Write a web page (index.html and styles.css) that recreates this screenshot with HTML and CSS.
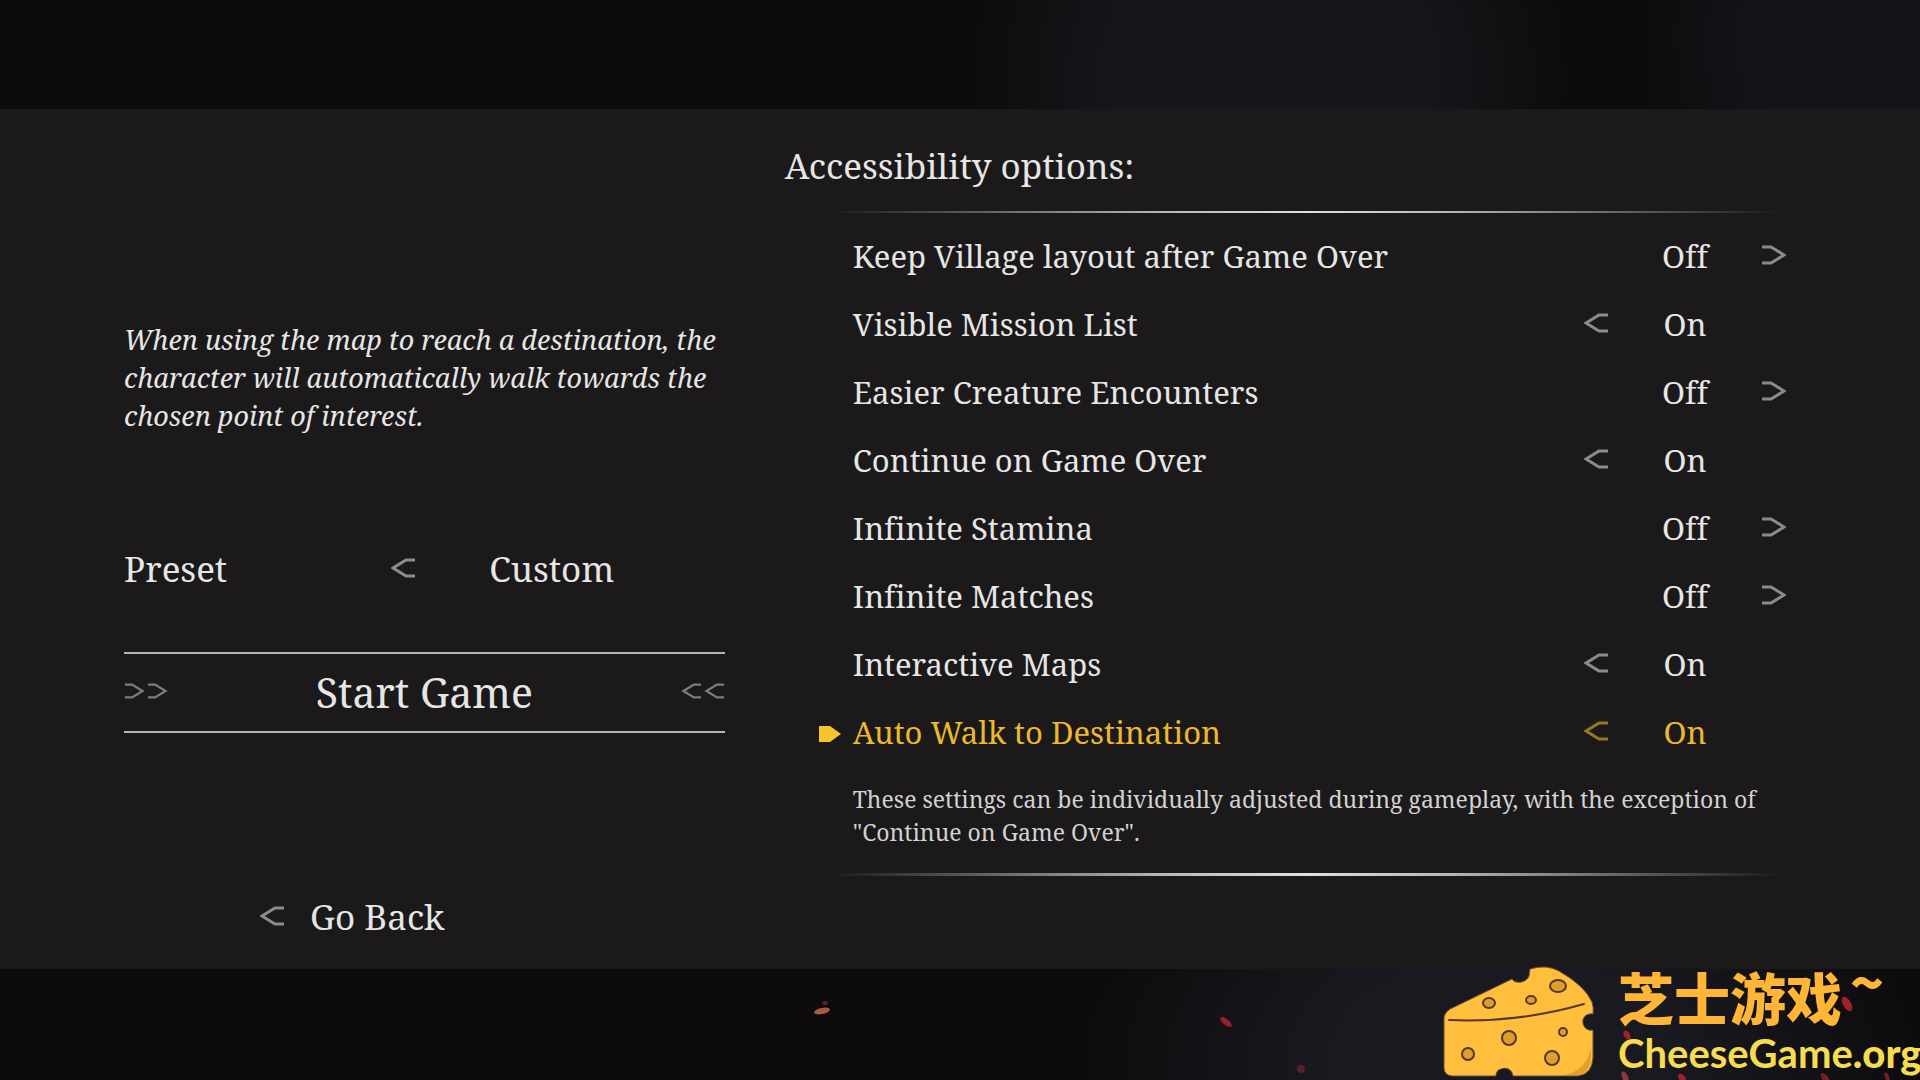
FILE: index.html
```html
<!DOCTYPE html>
<html lang="en">
  <head>
    <meta charset="UTF-8" />
    <meta name="viewport" content="width=device-width, initial-scale=1.0" />
    <title>Accessibility options</title>
    <link rel="stylesheet" href="styles.css">
  </head>
  <body>
    <!-- Shared arrow shapes -->
    <svg class="defs" aria-hidden="true">
      <symbol id="arrow-left" viewBox="0 0 24 20">
        <path d="M24 2H15L2 10L15 18H24" />
      </symbol>
      <symbol id="arrow-right" viewBox="0 0 24 20">
        <path d="M0 2H9L22 10L9 18H0" />
      </symbol>
    </svg>

    <main class="panel">
      <section class="side">
        <p class="hint">When using the map to reach a destination, the character will automatically walk towards the chosen point of interest.</p>

        <div class="preset">
          <span class="preset-label" id="preset">Preset</span>
          <button class="arrow" aria-label="Previous preset"><svg><use href="#arrow-left" /></svg></button>
          <output class="value" aria-labelledby="preset">Custom</output>
        </div>

        <button class="start">
          <span class="arrows"><svg><use href="#arrow-right" /></svg><svg><use href="#arrow-right" /></svg></span>
          <span>Start Game</span>
          <span class="arrows"><svg><use href="#arrow-left" /></svg><svg><use href="#arrow-left" /></svg></span>
        </button>

        <button class="back">
          <svg><use href="#arrow-left" /></svg>
          <span>Go Back</span>
        </button>
      </section>

      <section class="settings">
        <h1>Accessibility options:</h1>
        <hr class="line">
        <ul class="options">
          <li class="option">
            <span class="label" id="opt-village">Keep Village layout after Game Over</span>
            <output class="value" aria-labelledby="opt-village">Off</output>
            <button class="arrow next" aria-label="Turn on"><svg><use href="#arrow-right" /></svg></button>
          </li>
          <li class="option">
            <span class="label" id="opt-missions">Visible Mission List</span>
            <button class="arrow prev" aria-label="Turn off"><svg><use href="#arrow-left" /></svg></button>
            <output class="value" aria-labelledby="opt-missions">On</output>
          </li>
          <li class="option">
            <span class="label" id="opt-creatures">Easier Creature Encounters</span>
            <output class="value" aria-labelledby="opt-creatures">Off</output>
            <button class="arrow next" aria-label="Turn on"><svg><use href="#arrow-right" /></svg></button>
          </li>
          <li class="option">
            <span class="label" id="opt-continue">Continue on Game Over</span>
            <button class="arrow prev" aria-label="Turn off"><svg><use href="#arrow-left" /></svg></button>
            <output class="value" aria-labelledby="opt-continue">On</output>
          </li>
          <li class="option">
            <span class="label" id="opt-stamina">Infinite Stamina</span>
            <output class="value" aria-labelledby="opt-stamina">Off</output>
            <button class="arrow next" aria-label="Turn on"><svg><use href="#arrow-right" /></svg></button>
          </li>
          <li class="option">
            <span class="label" id="opt-matches">Infinite Matches</span>
            <output class="value" aria-labelledby="opt-matches">Off</output>
            <button class="arrow next" aria-label="Turn on"><svg><use href="#arrow-right" /></svg></button>
          </li>
          <li class="option">
            <span class="label" id="opt-maps">Interactive Maps</span>
            <button class="arrow prev" aria-label="Turn off"><svg><use href="#arrow-left" /></svg></button>
            <output class="value" aria-labelledby="opt-maps">On</output>
          </li>
          <li class="option selected">
            <svg class="marker" viewBox="0 0 22 16"><path d="M0 0H11L22 8L11 16H0Z" /></svg>
            <span class="label" id="opt-walk">Auto Walk to Destination</span>
            <button class="arrow prev" aria-label="Turn off"><svg><use href="#arrow-left" /></svg></button>
            <output class="value" aria-labelledby="opt-walk">On</output>
          </li>
        </ul>
        <p class="note">These settings can be individually adjusted during gameplay, with the exception of "Continue on Game Over".</p>
        <hr class="line thick">
      </section>
    </main>

    <!-- Embers floating over the background -->
    <svg class="embers" viewBox="0 0 1120 110" aria-hidden="true">
      <ellipse cx="22" cy="41" rx="8" ry="3" fill="#a85a48" transform="rotate(-12 22 41)" />
      <ellipse cx="25" cy="33" rx="3" ry="2" fill="#4a2624" />
      <ellipse cx="426" cy="52" rx="7" ry="3" fill="#97202b" transform="rotate(40 426 52)" />
      <circle cx="501" cy="99" r="4" fill="#5a1f27" />
      <ellipse cx="1047" cy="34" rx="8" ry="4" fill="#a3202b" transform="rotate(60 1047 34)" />
      <ellipse cx="827" cy="65" rx="5" ry="3" fill="#a3202b" transform="rotate(60 827 65)" />
      <ellipse cx="825" cy="107" rx="6" ry="3" fill="#8a3a42" transform="rotate(65 825 107)" />
      <ellipse cx="882" cy="108" rx="5" ry="3" fill="#a3202b" transform="rotate(50 882 108)" />
      <ellipse cx="1025" cy="108" rx="6" ry="3" fill="#7a1c26" transform="rotate(50 1025 108)" />
      <ellipse cx="1087" cy="107" rx="5" ry="2" fill="#7a1c26" transform="rotate(70 1087 107)" />
    </svg>

    <div class="brand">
      <svg class="cheese" viewBox="0 0 156 114" aria-hidden="true">
        <path class="body" d="M4 51Q5 46 10 43L72 13C75 18 84 17 88 12C90 9 89 6 90 3Q106 -2 119 5Q145 20 152 36Q154 42 153 48C146 47 142 52 143 57C144 63 149 65 153 64V92Q152 108 138 110H73C72 103 66 101 61 103C57 104 56 107 56 110H12Q4 109 4 102Z" />
        <path class="shade" d="M151 82V92Q150 107 138 109H122Q145 107 151 82Z" />
        <path class="crease" d="M9 54Q78 57 144 38" />
        <g class="holes">
          <ellipse cx="49" cy="37" rx="6" ry="5" />
          <ellipse cx="91" cy="34" rx="5" ry="4" />
          <ellipse cx="118" cy="20" rx="8" ry="6" />
          <ellipse cx="69" cy="72" rx="7" ry="7" />
          <circle cx="123" cy="66" r="4" />
          <ellipse cx="28" cy="88" rx="6" ry="6" />
          <ellipse cx="112" cy="92" rx="7" ry="7" />
        </g>
      </svg>
      <div class="brand-text">
        <span class="brand-cn" lang="zh">芝士游戏<span class="tilde">~</span></span>
        <span class="brand-url">CheeseGame<b>.org</b></span>
      </div>
    </div>
  </body>
</html>
```

FILE: styles.css
```css
* {
  box-sizing: border-box;
}
body {
  margin: 0;
  padding: 109px 0 111px;
  min-height: 100vh;
  display: flex;
  position: relative;
  overflow-x: hidden;
  color: #e6e6e6;
  font-family: "Noto Serif", "DejaVu Serif Condensed", "DejaVu Serif", serif;
  font-variant-ligatures: none;
  background:
    radial-gradient(ellipse 300px 300px at 1270px 80px, #17161b 50%, transparent),
    radial-gradient(ellipse 220px 300px at 1860px 40px, #141318 50%, transparent),
    radial-gradient(ellipse 420px 260px at 1500px 1060px, #191920 40%, transparent),
    #0d0b0c;
}
button {
  padding: 0;
  border: 0;
  background: none;
  color: inherit;
  font: inherit;
  cursor: pointer;
}
svg {
  display: block;
  fill: none;
}
.defs {
  position: absolute;
  width: 0;
  height: 0;
}
.panel {
  flex: 1;
  display: grid;
  grid-template-columns: 3fr 5fr;
  gap: 60px;
  padding: 33px 134px 0 124px;
  background: #1b191a;
}

/* Left side */
.side {
  display: flex;
  flex-direction: column;
  padding-top: 179px;
}
.hint {
  margin: 0 0 110px;
  font-size: 27px;
  line-height: 38px;
  font-style: italic;
}
.preset {
  display: grid;
  grid-template-columns: 1fr 24px 274px 36px;
  align-items: center;
  margin-bottom: 59px;
  font-size: 35px;
  line-height: 48px;
}
.value {
  text-align: center;
}
.arrow svg,
.back svg {
  width: 24px;
  height: 20px;
  margin-bottom: 2px;
  stroke: #8c8c8c;
  stroke-width: 3;
}
.start {
  display: flex;
  justify-content: space-between;
  align-items: center;
  margin-bottom: 160px;
  border: solid #b4b4b4;
  border-width: 2px 0;
  font-size: 41px;
  line-height: 77px;
}
.arrows {
  display: flex;
  gap: 2px;
  margin-bottom: 4px;
}
.arrows svg {
  width: 21px;
  height: 16px;
  stroke: #7c7c7c;
  stroke-width: 3;
}
.back {
  display: flex;
  align-items: center;
  gap: 26px;
  align-self: flex-start;
  margin-left: 136px;
  font-size: 35px;
  line-height: 48px;
}

/* Right side */
h1 {
  margin: 0 0 21px;
  font-size: 35px;
  line-height: 48px;
  font-weight: normal;
}
.line {
  height: 2px;
  margin: 0 6px 0 46px;
  border: 0;
  background: linear-gradient(90deg, transparent, #b8b8b8 35%, #e0e0e0 50%, #b8b8b8 65%, transparent);
}
.line.thick {
  height: 3px;
}
.options {
  margin: 9px 0 0 34px;
  padding: 0;
  list-style: none;
}
.option {
  display: grid;
  grid-template-columns: 34px 1fr 24px 154px 24px;
  align-items: center;
  font-size: 31px;
  line-height: 68px;
}
.option > * {
  grid-row: 1;
}
.marker {
  grid-column: 1;
  width: 22px;
  height: 16px;
  margin-top: 4px;
  fill: #f5c62c;
}
.label {
  grid-column: 2;
}
.prev {
  grid-column: 3;
}
.option .value {
  grid-column: 4;
}
.next {
  grid-column: 5;
}
.selected {
  color: #edb92c;
}
.selected .arrow svg {
  stroke: #927a20;
}
.note {
  margin: 17px 0 24px 68px;
  font-size: 23px;
  line-height: 33px;
  color: #d2d2d2;
}

/* Overlays */
.embers {
  position: absolute;
  right: 0;
  bottom: 0;
  width: 1120px;
  height: 110px;
}
.brand {
  position: absolute;
  right: 0;
  bottom: 0;
  display: flex;
  gap: 22px;
}
.cheese {
  width: 156px;
  height: 114px;
}
.cheese .body {
  fill: #ffbf3c;
  stroke: #6b4a3a;
  stroke-width: 1;
}
.cheese .shade {
  fill: #e3a02c;
}
.cheese .crease {
  stroke: #54382f;
  stroke-width: 2;
  stroke-linecap: round;
}
.cheese .holes {
  fill: #dd9e2a;
  stroke: #54382f;
  stroke-width: 2;
}
.brand-text {
  display: flex;
  flex-direction: column;
  width: 302px;
  white-space: nowrap;
}
.brand-cn {
  font-family: "Noto Sans CJK SC", sans-serif;
  font-size: 56px;
  line-height: 60px;
  font-weight: 900;
  color: #ffb637;
}
.tilde {
  margin-left: 8px;
  line-height: 0;
  vertical-align: 16px;
}
.brand-url {
  font-family: Lato, sans-serif;
  font-size: 40px;
  line-height: 54px;
  font-weight: bold;
  color: #f6dc50;
}
.brand-url b {
  font-weight: 900;
}
```
